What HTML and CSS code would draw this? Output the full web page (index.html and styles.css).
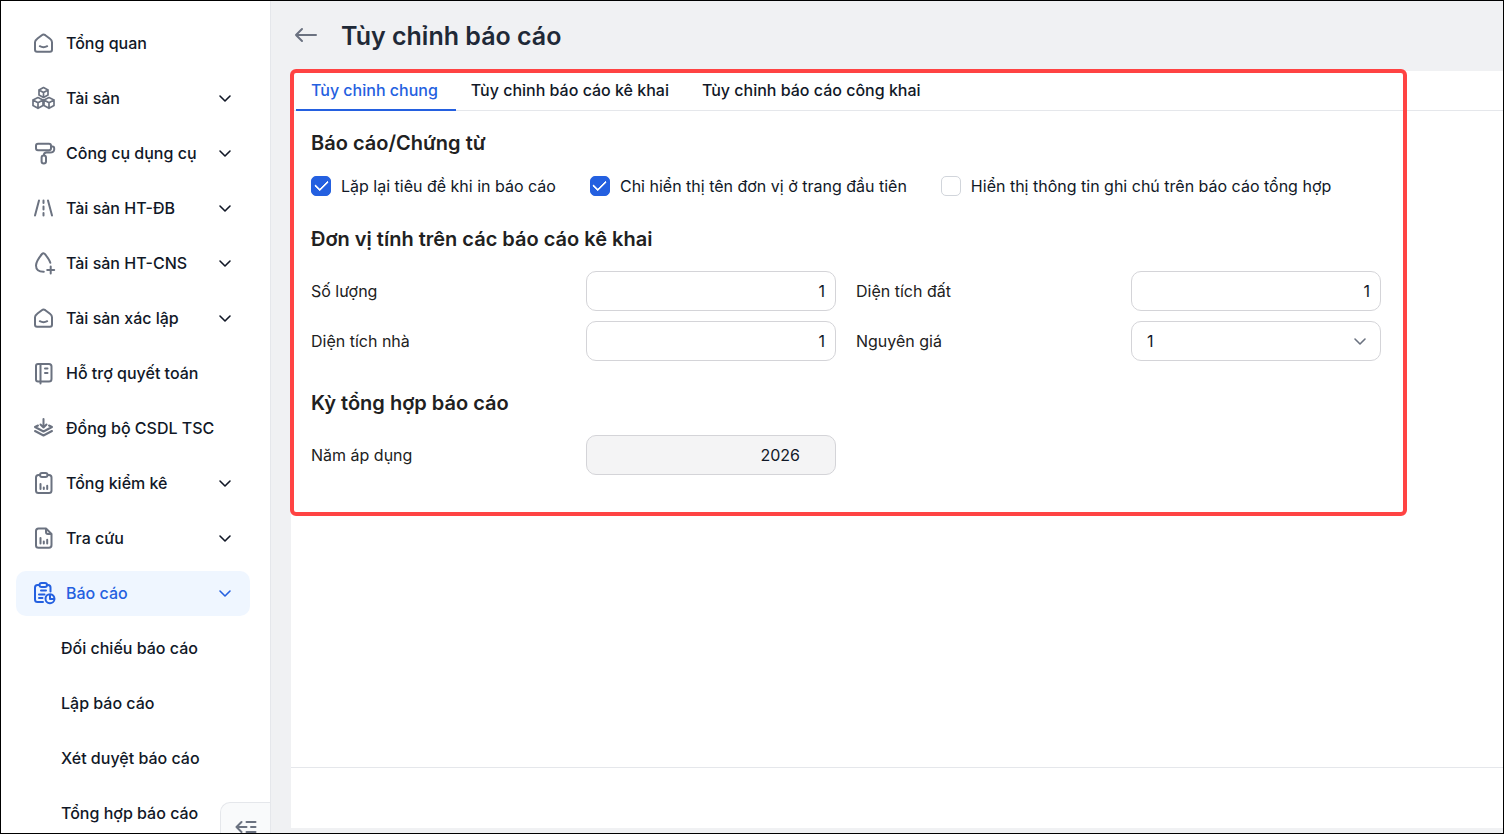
FILE: index.html
```html
<!DOCTYPE html>
<html lang="vi">
<head>
<meta charset="utf-8">
<meta name="viewport" content="width=device-width, initial-scale=1">
<title>Tùy chỉnh báo cáo</title>
<link rel="stylesheet" href="styles.css">
</head>
<body>
<svg class="sprite" aria-hidden="true">
  <symbol id="i-home" viewBox="0 0 24 24"><path d="M5.200 7.800 9.800 4.200Q11.500 3 13.300 4.200L18 7.800Q20 9.300 20 11.300V18.500Q20 20.800 18 20.800H5Q3 20.800 3 18.500V11.300Q3 9.300 5.200 7.800ZM7.800 15.200Q11.500 17.200 15.200 15.200"/></symbol>
  <symbol id="i-cubes" viewBox="0 0 24 24"><path d="M11.500 1.500 16 4V9L11.500 11.500 7 9V4ZM7 4 11.500 6.500 16 4M11.500 6.500V11.500M6 11.500 11 14V19.500L6 22.300 1 19.500V14ZM1 14 6 16.800 11 14M6 16.800V22.300M17 11.500 22 14V19.500L17 22.300 12 19.500V14ZM12 14 17 16.800 22 14M17 16.800V22.300"/></symbol>
  <symbol id="i-roller" viewBox="0 0 24 24"><path d="M6 2.800H17Q19 2.800 19 4.800V7.200Q19 9.200 17 9.200H6Q4 9.200 4 7.200V4.800Q4 2.800 6 2.800ZM19 5.500H20.500Q22.200 5.500 22.200 7.500V8.500Q22 11.500 18 11.500H14.500Q11.800 11.500 11.800 14.500M11.800 14.500Q14 14.500 14 16.500V20.500Q14 22.500 11.800 22.500T9.600 20.500V16.500Q9.600 14.500 11.800 14.500Z"/></symbol>
  <symbol id="i-road" viewBox="0 0 24 24"><path d="M7 4.500 3 19.500M16 4.500 20 19.500M11.500 4.500V7M11.500 10.500V13.500M11.500 17V19.500"/></symbol>
  <symbol id="i-drop" viewBox="0 0 24 24"><path d="M11.800 20.700Q4 20.800 4 14.500C4 10.500 7.500 6 10 3Q11.500 1.300 13 3.200C15 5.700 17.500 9 18.300 11.800M18.700 15.500V22.500M15.200 19H22.200"/></symbol>
  <symbol id="i-book" viewBox="0 0 24 24"><path d="M6 3H17Q19.500 3 19.500 5.500V18Q19.500 20.500 17 20.500H6Q4 20.500 4 18.500V5Q4 3 6 3ZM8.500 3V22.500M13 7.500H15.500M13 12H15.500"/></symbol>
  <symbol id="i-layers" viewBox="0 0 24 24"><path d="M11.500 3V11.500M8.500 8.500 11.500 11.500 14.500 8.500M6 9.500 3 11 11.500 15.500 20 11 17 9.500M3 15 11.500 19.500 20 15"/></symbol>
  <symbol id="i-clip" viewBox="0 0 24 24"><path d="M8 4H6.500Q4 4 4 6.500V19.500Q4 22 6.500 22H17Q19.500 22 19.500 19.500V6.500Q19.500 4 17 4H15.500M10 2H13.500Q15.500 2 15.500 4T13.500 6H10Q8 6 8 4T10 2ZM8.500 13V18M11.800 16.500V18M15.200 14.800V18"/></symbol>
  <symbol id="i-doc" viewBox="0 0 24 24"><path d="M6.500 2.500H14L19.500 8V19Q19.500 21.800 17 21.800H6.500Q4 21.800 4 19.500V5Q4 2.500 6.500 2.500ZM14 2.500V6Q14 8 16 8H19.500M8.500 12V17.500M11.800 15.500V17.500M15.200 13.800V17.500"/></symbol>
  <symbol id="i-report" viewBox="0 0 24 24"><path d="M7.500 4H5.500Q3 4 3 6.500V18.500Q3 21 5.500 21H11M15 4H16Q18.500 4 18.500 6.500V10.500M9.500 2H13Q15 2 15 4T13 6H9.500Q7.500 6 7.500 4T9.500 2ZM9 9.500H14M7 13.500H12.500M7 17H10.500M18 13.200A4.500 4.500 0 1 0 22.500 18H18ZM18 13.200Q22.300 13.600 22.500 18"/></symbol>
  <symbol id="i-down" viewBox="0 0 18 18"><path d="M4 7 9 12 14 7"/></symbol>
</svg>

<div class="app">
  <aside class="sidebar">
    <nav class="menu" aria-label="Menu chính">
      <a class="item" href="#"><svg class="icon"><use href="#i-home"/></svg><span class="name">Tổng quan</span></a>
      <a class="item" href="#"><svg class="icon thin"><use href="#i-cubes"/></svg><span class="name">Tài sản</span><svg class="chevron"><use href="#i-down"/></svg></a>
      <a class="item" href="#"><svg class="icon"><use href="#i-roller"/></svg><span class="name">Công cụ dụng cụ</span><svg class="chevron"><use href="#i-down"/></svg></a>
      <a class="item" href="#"><svg class="icon"><use href="#i-road"/></svg><span class="name">Tài sản HT-ĐB</span><svg class="chevron"><use href="#i-down"/></svg></a>
      <a class="item" href="#"><svg class="icon"><use href="#i-drop"/></svg><span class="name">Tài sản HT-CNS</span><svg class="chevron"><use href="#i-down"/></svg></a>
      <a class="item" href="#"><svg class="icon"><use href="#i-home"/></svg><span class="name">Tài sản xác lập</span><svg class="chevron"><use href="#i-down"/></svg></a>
      <a class="item" href="#"><svg class="icon"><use href="#i-book"/></svg><span class="name">Hỗ trợ quyết toán</span></a>
      <a class="item" href="#"><svg class="icon"><use href="#i-layers"/></svg><span class="name">Đồng bộ CSDL TSC</span></a>
      <a class="item" href="#"><svg class="icon"><use href="#i-clip"/></svg><span class="name">Tổng kiểm kê</span><svg class="chevron"><use href="#i-down"/></svg></a>
      <a class="item" href="#"><svg class="icon"><use href="#i-doc"/></svg><span class="name">Tra cứu</span><svg class="chevron"><use href="#i-down"/></svg></a>
      <a class="item active" href="#"><svg class="icon"><use href="#i-report"/></svg><span class="name">Báo cáo</span><svg class="chevron"><use href="#i-down"/></svg></a>
      <a class="item sub" href="#">Đối chiếu báo cáo</a>
      <a class="item sub" href="#">Lập báo cáo</a>
      <a class="item sub" href="#">Xét duyệt báo cáo</a>
      <a class="item sub" href="#">Tổng hợp báo cáo</a>
    </nav>
    <button class="collapse" type="button" aria-label="Thu gọn menu">
      <svg class="icon" viewBox="0 0 24 24"><path d="M7.500 7 2.500 12 7.500 17M2.500 12H12.500M12.500 7H21.500M17 12H21.500M12.500 17H21.500"/></svg>
    </button>
  </aside>

  <main class="main">
    <header class="header">
      <button class="back" type="button" aria-label="Quay lại">
        <svg class="icon" viewBox="0 0 24 24"><path d="M8 6 2 12 8 18M2 12H22"/></svg>
      </button>
      <h1 class="title">Tùy chỉnh báo cáo</h1>
    </header>

    <section class="panel">
      <div class="tabs" role="tablist">
        <button class="tab selected" type="button" role="tab" aria-selected="true">Tùy chỉnh chung</button>
        <button class="tab" type="button" role="tab" aria-selected="false">Tùy chỉnh báo cáo kê khai</button>
        <button class="tab" type="button" role="tab" aria-selected="false">Tùy chỉnh báo cáo công khai</button>
      </div>

      <form class="settings">
        <h2 class="heading">Báo cáo/Chứng từ</h2>
        <div class="checks">
          <label class="check"><input class="box" type="checkbox" checked>Lặp lại tiêu đề khi in báo cáo</label>
          <label class="check"><input class="box" type="checkbox" checked>Chỉ hiển thị tên đơn vị ở trang đầu tiên</label>
          <label class="check"><input class="box" type="checkbox">Hiển thị thông tin ghi chú trên báo cáo tổng hợp</label>
        </div>

        <h2 class="heading">Đơn vị tính trên các báo cáo kê khai</h2>
        <div class="fields">
          <div class="field"><label for="qty">Số lượng</label><input class="control" id="qty" type="text" value="1"></div>
          <div class="field"><label for="land">Diện tích đất</label><input class="control" id="land" type="text" value="1"></div>
          <div class="field"><label for="house">Diện tích nhà</label><input class="control" id="house" type="text" value="1"></div>
          <div class="field"><label for="price">Nguyên giá</label>
            <div class="select">
              <select class="control" id="price"><option>1</option></select>
              <svg class="chevron"><use href="#i-down"/></svg>
            </div>
          </div>
        </div>

        <h2 class="heading">Kỳ tổng hợp báo cáo</h2>
        <div class="fields">
          <div class="field"><label for="year">Năm áp dụng</label><input class="control year" id="year" type="text" value="2026" readonly></div>
        </div>
        <div class="highlight"></div>
      </form>

      <footer class="actions"></footer>
    </section>
  </main>
</div>
</body>
</html>
```

FILE: styles.css
```css
* {
  box-sizing: border-box;
}

body {
  margin: 0;
  font: 400 16px/22px Inter, "Noto Sans", sans-serif;
  color: #111827;
}

button,
input,
select {
  font: inherit;
  color: inherit;
}

button {
  padding: 0;
  border: 0;
  background: none;
  cursor: pointer;
}

.sprite {
  display: none;
}

.app {
  display: flex;
  height: 100vh;
  border: 1px solid #000;
  overflow: hidden;
  background: #f0f1f3;
}

.icon {
  flex: none;
  width: 24px;
  height: 24px;
  fill: none;
  stroke: #6b7280;
  stroke-width: 2;
  stroke-linecap: round;
  stroke-linejoin: round;
}

.icon.thin {
  stroke-width: 1.7;
}

.chevron {
  flex: none;
  width: 18px;
  height: 18px;
  fill: none;
  stroke: currentColor;
  stroke-width: 1.6;
  stroke-linecap: round;
  stroke-linejoin: round;
}

/* Sidebar */
.sidebar {
  position: relative;
  flex: none;
  width: 270px;
  border-right: 1px solid #e5e7eb;
  background: #fff;
  overflow: hidden;
}

.menu {
  display: flex;
  flex-direction: column;
  gap: 10px;
  padding: 20px 20px 20px 15px;
}

.item {
  display: flex;
  flex: none;
  align-items: center;
  gap: 10px;
  height: 45px;
  padding: 0 16px 1px;
  border-radius: 10px;
  color: #111827;
  font-weight: 500;
  text-decoration: none;
}

.item .name {
  flex: 1;
  white-space: nowrap;
}

.item.active {
  background: #eff6ff;
  color: #2460e0;
}

.item.active .icon {
  stroke: currentColor;
}

.item.sub {
  padding-left: 45px;
}

.collapse {
  position: absolute;
  right: 0;
  bottom: -19px;
  display: flex;
  align-items: center;
  justify-content: center;
  width: 50px;
  height: 50px;
  border: 1px solid #e5e7eb;
  border-right: 0;
  border-radius: 10px 0 0 0;
  background: #f9fafb;
}

/* Page */
.main {
  display: flex;
  flex: 1;
  flex-direction: column;
  min-width: 0;
  padding: 0 0 5px 20px;
}

.header {
  display: flex;
  flex: none;
  align-items: center;
  gap: 23px;
  height: 70px;
  padding-left: 3px;
}

.back {
  display: flex;
  margin-bottom: 2px;
}

.title {
  margin: 0;
  color: #1f2937;
  font-size: 25px;
  font-weight: 600;
  line-height: 32px;
}

.panel {
  display: flex;
  flex: 1;
  flex-direction: column;
  min-height: 0;
  background: #fff;
}

.tabs {
  display: flex;
  flex: none;
  height: 40px;
  padding-left: 5px;
  border-bottom: 1px solid #e5e7eb;
}

.tab {
  height: 40px;
  padding: 0 18px 0 15px;
  border-bottom: 2px solid transparent;
  font-weight: 500;
  white-space: nowrap;
}

.tab.selected {
  border-bottom-color: #2460e0;
  color: #2460e0;
}

.settings {
  position: relative;
  flex: 1;
  max-width: 1115px;
  padding: 20px 25px 0 20px;
}

.heading {
  margin: 0 0 20px;
  color: #212121;
  font-size: 20px;
  font-weight: 600;
  line-height: 24px;
}

.checks,
.fields {
  margin-bottom: 30px;
}

.checks {
  display: flex;
  gap: 34px;
}

.check {
  display: flex;
  align-items: center;
  gap: 10px;
  white-space: nowrap;
}

.box {
  flex: none;
  width: 20px;
  height: 20px;
  margin: 0;
  border: 1px solid #d1d5db;
  border-radius: 5px;
  background: #fff;
  appearance: none;
}

.box:checked {
  display: grid;
  place-items: center;
  border-color: #2460e0;
  background: #2460e0;
}

.box:checked::before {
  content: "";
  width: 11px;
  height: 6px;
  margin-bottom: 4px;
  border: solid #fff;
  border-width: 0 0 2px 2px;
  border-radius: 1px;
  rotate: -45deg;
}

.fields {
  display: grid;
  grid-template-columns: 1fr 1fr;
  gap: 10px 20px;
}

.field {
  display: grid;
  grid-template-columns: 275fr 250fr;
  align-items: center;
  color: #212121;
}

.control {
  width: 100%;
  min-width: 0;
  height: 40px;
  padding: 0 10px;
  border: 1px solid #d4d4d8;
  border-radius: 10px;
  background: #fff;
  color: #111827;
  text-align: right;
}

.control.year {
  padding-right: 35px;
  background: #f4f4f5;
}

.select {
  display: grid;
  align-items: center;
}

.select > * {
  grid-area: 1 / 1;
}

.select .control {
  padding: 0 15px;
  text-align: left;
  appearance: none;
}

.select .chevron {
  justify-self: end;
  margin-right: 12px;
  color: #6b7280;
  pointer-events: none;
}

/* Marker frame over the tabs and the form */
.highlight {
  position: absolute;
  top: -42px;
  right: -1px;
  left: -1px;
  height: 447px;
  border: 4px solid #ff4343;
  border-radius: 6px;
  pointer-events: none;
}

.actions {
  flex: none;
  height: 61px;
  border-top: 1px solid #e5e7eb;
}
```
